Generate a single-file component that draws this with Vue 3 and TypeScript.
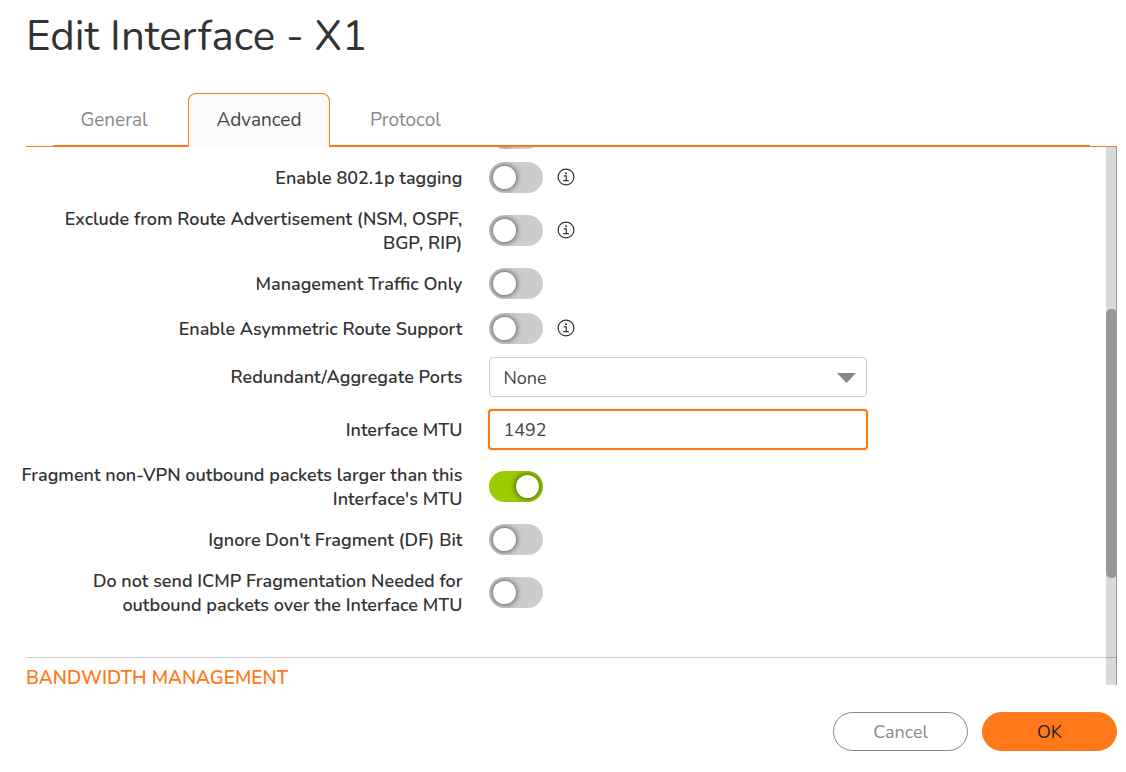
<script setup lang="ts">
import { ref } from 'vue'

interface ToggleRow {
  id: string
  label: string
  on: boolean
  info?: boolean
  tall?: boolean
}

const tabs = ['General', 'Advanced', 'Protocol']
const activeTab = ref('Advanced')

const routing = ref<ToggleRow[]>([
  { id: 'tagging', label: 'Enable 802.1p tagging', on: false, info: true },
  { id: 'route-adv', label: 'Exclude from Route Advertisement (NSM, OSPF,\nBGP, RIP)', on: false, info: true, tall: true },
  { id: 'mgmt', label: 'Management Traffic Only', on: false },
  { id: 'asym', label: 'Enable Asymmetric Route Support', on: false, info: true },
])

const fragmentation = ref<ToggleRow[]>([
  { id: 'fragment', label: "Fragment non-VPN outbound packets larger than this\nInterface's MTU", on: true, tall: true },
  { id: 'ignore-df', label: "Ignore Don't Fragment (DF) Bit", on: false },
  { id: 'icmp', label: 'Do not send ICMP Fragmentation Needed for\noutbound packets over the Interface MTU', on: false, tall: true },
])

const previous = ref(false)
const port = ref('None')
const mtu = ref('1492')
</script>

<template>
  <main class="dialog">
    <h1 class="title">Edit Interface - X1</h1>

    <div class="tabbar">
      <div class="tabs" role="tablist">
        <button
          v-for="tab in tabs"
          :key="tab"
          type="button"
          role="tab"
          class="tab"
          :class="{ active: tab === activeTab }"
          :aria-selected="tab === activeTab"
          @click="activeTab = tab"
        >{{ tab }}</button>
      </div>
    </div>

    <section class="panel">
      <form class="content" @submit.prevent>
        <div class="row scrolled">
          <span></span>
          <div class="control"><input v-model="previous" type="checkbox" class="switch" aria-hidden="true" tabindex="-1" /></div>
        </div>

        <div v-for="row in routing" :key="row.id" class="row" :class="{ tall: row.tall }">
          <label :for="row.id">{{ row.label }}</label>
          <div class="control">
            <input :id="row.id" v-model="row.on" type="checkbox" class="switch" />
            <svg v-if="row.info" class="info" viewBox="0 0 18 18" aria-hidden="true">
              <circle cx="9" cy="9" r="7.9" />
              <path d="M6.700 7.800h2.600v4.700M6.200 12.700h5.600" />
              <circle class="dot" cx="9" cy="5.200" r="1" />
            </svg>
          </div>
        </div>

        <div class="row">
          <label for="port">Redundant/Aggregate Ports</label>
          <div class="control">
            <div class="select">
              <select id="port" v-model="port"><option>None</option></select>
              <svg class="caret" viewBox="0 0 19 10" aria-hidden="true"><path d="M0 0h19L9.500 10z" /></svg>
            </div>
          </div>
        </div>

        <div class="row">
          <label for="mtu">Interface MTU</label>
          <div class="control"><input id="mtu" v-model="mtu" type="text" class="text" /></div>
        </div>

        <div v-for="row in fragmentation" :key="row.id" class="row" :class="{ tall: row.tall }">
          <label :for="row.id">{{ row.label }}</label>
          <div class="control">
            <input :id="row.id" v-model="row.on" type="checkbox" class="switch" />
          </div>
        </div>

        <h2 class="section">BANDWIDTH MANAGEMENT</h2>
      </form>
      <div class="track"><div class="thumb"></div></div>
    </section>

    <footer class="actions">
      <button type="button" class="btn">Cancel</button>
      <button type="button" class="btn primary">OK</button>
    </footer>
  </main>
</template>

<style>
body {
  background: #fff;
}
</style>

<style scoped>
.dialog {
  display: flex;
  flex-direction: column;
  box-sizing: border-box;
  height: 100vh;
  padding: 9px 9px 21px 26px;
  color: #333;
  font-family: Nunito, Lato, sans-serif;
  font-size: 18px;
  font-weight: 400;
}

.title {
  margin: 0;
  font-size: 42px;
  font-weight: 400;
  line-height: 56px;
}

.tabbar {
  margin-top: 28px;
  padding: 0 27px;
  border-bottom: 1px solid #ff791a;
}

.tabs {
  display: flex;
  gap: 13px;
  border-bottom: 1px solid #ff791a;
}

.tab {
  height: 52px;
  min-width: 122px;
  padding: 0 26px;
  border: 1px solid transparent;
  border-bottom: 0;
  border-radius: 8px 8px 0 0;
  background: none;
  color: #888;
  font: inherit;
  font-size: 19px;
}

.tab.active {
  position: relative;
  z-index: 1;
  height: 54px;
  min-width: 142px;
  margin-bottom: -2px;
  padding-bottom: 2px;
  border-color: #ff791a;
  background: #fafafa;
  color: #444;
}

.panel {
  position: relative;
  flex: 1;
  min-height: 0;
  margin-left: -6px;
  padding-left: 6px;
  overflow: hidden;
}

.content {
  display: flex;
  flex-direction: column;
  gap: 12px;
  margin-top: -31px;
}

.row {
  display: grid;
  grid-template-columns: 40% 1fr;
  column-gap: 27px;
  align-items: center;
  min-height: 33px;
}

.row.tall {
  min-height: 49px;
}

.row.scrolled {
  align-items: end;
}

label {
  margin-left: -6px;
  font-size: 18px;
  font-weight: 600;
  line-height: 24px;
  text-align: right;
  white-space: pre-line;
}

.control {
  display: flex;
  align-items: center;
  gap: 14px;
}

.switch {
  display: flex;
  align-items: center;
  width: 54px;
  height: 31px;
  margin: 0;
  padding: 0 4px;
  box-sizing: border-box;
  border-radius: 16px;
  background: #ccc;
  appearance: none;
  overflow: hidden;
}

.switch::before {
  width: 23px;
  height: 23px;
  border-radius: 50%;
  background: #fff;
  box-shadow: 0 0 6px rgba(0, 0, 0, 0.75);
  content: '';
}

.switch:checked {
  justify-content: flex-end;
  background: #9c0;
}

.info {
  width: 18px;
  height: 18px;
  margin-bottom: 2px;
  fill: none;
  stroke: #333;
  stroke-width: 1.2;
}

.info .dot {
  fill: #333;
  stroke: none;
}

.select {
  position: relative;
  width: 378px;
}

select,
.text {
  box-sizing: border-box;
  width: 378px;
  height: 40px;
  padding: 2px 13px 0;
  border: 1px solid #ccc;
  border-radius: 4px;
  background: #fff;
  color: #444;
  font: inherit;
  appearance: none;
}

select {
  display: block;
}

.caret {
  position: absolute;
  top: 16px;
  right: 11px;
  width: 19px;
  height: 10px;
  fill: #888;
  pointer-events: none;
}

.text {
  height: 41px;
  width: 380px;
  margin: 0 -1px;
  padding-top: 0;
  border: 2px solid #ff791a;
  outline: 0;
  box-shadow: 0 0 1px #ff791a;
}

.section {
  margin: 28px 0 0;
  padding-top: 12px;
  border-top: 1px solid #ccc;
  color: #ff791a;
  font-size: 19px;
  font-weight: 600;
  line-height: 16px;
}

.track {
  position: absolute;
  top: 0;
  right: 0;
  bottom: 0;
  width: 11px;
  box-sizing: border-box;
  border-right: 1px solid rgba(0, 0, 0, 0.3);
  background: rgba(0, 0, 0, 0.15);
}

.thumb {
  width: 11px;
  height: 50%;
  margin-top: 162px;
  border-radius: 5px;
  background: #979797;
}

.actions {
  display: flex;
  justify-content: flex-end;
  gap: 14px;
  margin-top: 27px;
}

.btn {
  width: 135px;
  height: 39px;
  border: 1px solid #888;
  border-radius: 20px;
  background: #fff;
  color: #888;
  font: inherit;
}

.btn.primary {
  border-color: #ff791a;
  background: #ff791a;
  color: #222;
}
</style>
